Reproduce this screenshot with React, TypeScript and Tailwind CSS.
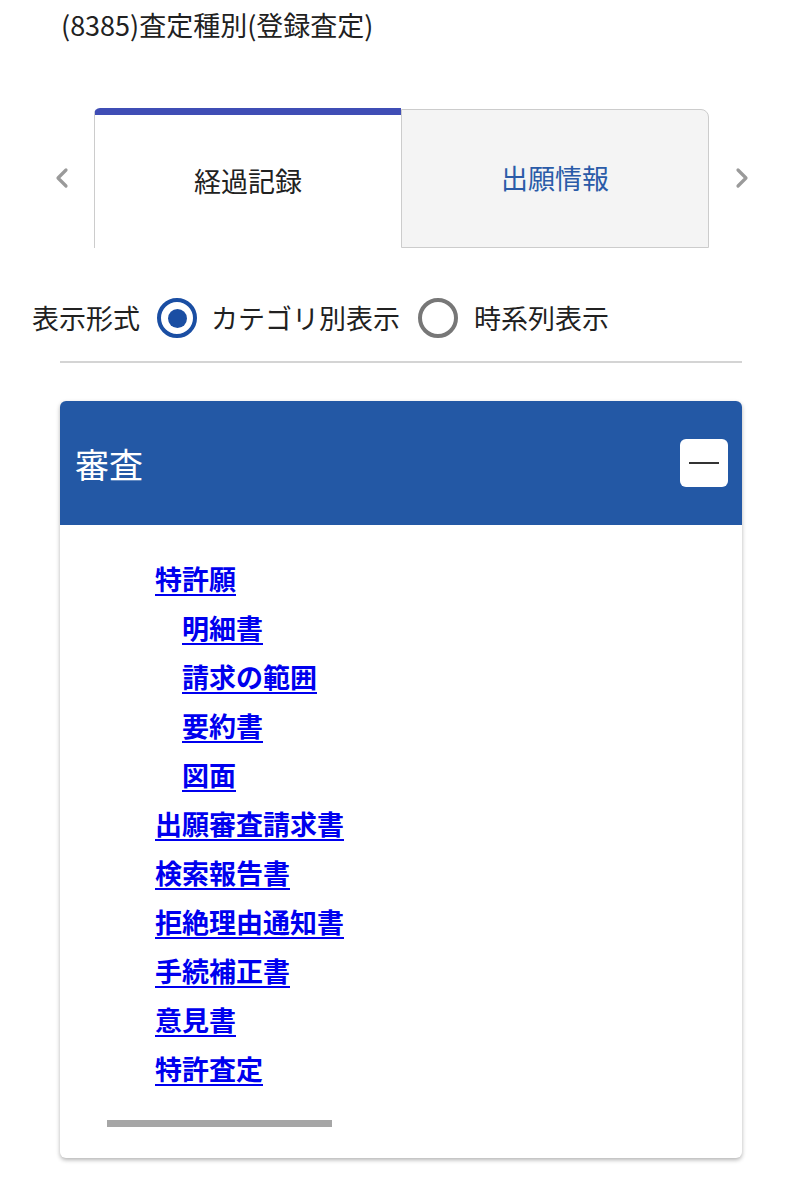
const links: { label: string; indent?: boolean }[] = [
  { label: "特許願" },
  { label: "明細書", indent: true },
  { label: "請求の範囲", indent: true },
  { label: "要約書", indent: true },
  { label: "図面", indent: true },
  { label: "出願審査請求書" },
  { label: "検索報告書" },
  { label: "拒絶理由通知書" },
  { label: "手続補正書" },
  { label: "意見書" },
  { label: "特許査定" },
];

function Chevron({ dir }: { dir: "left" | "right" }) {
  return (
    <svg width="14" height="24" viewBox="0 0 14 24" className="text-[#9a9a9a]">
      <polyline
        points={dir === "left" ? "11,4 3,12 11,20" : "3,4 11,12 3,20"}
        fill="none"
        stroke="currentColor"
        strokeWidth="3.2"
        strokeLinecap="round"
        strokeLinejoin="round"
      />
    </svg>
  );
}

function Radio({ checked }: { checked: boolean }) {
  return (
    <span
      className={`flex h-[40px] w-[40px] items-center justify-center rounded-full border-[4px] ${
        checked ? "border-[#1a4ea3]" : "border-[#777777]"
      }`}
    >
      {checked && <span className="h-[19px] w-[19px] rounded-full bg-[#1a4ea3]" />}
    </span>
  );
}

export default function App() {
  return (
    <div className="min-h-[1200px] w-[802px] bg-white font-['Noto_Sans_CJK_JP','Noto_Sans',sans-serif] text-[#212121]">
      <p className="pl-[61px] pt-[7px] text-[27px] leading-[36px]">(8385)査定種別(登録査定)</p>

      <div className="mt-[65px] flex items-end">
        <div className="flex h-[140px] w-[94px] items-center pl-[55px]">
          <Chevron dir="left" />
        </div>
        <div className="flex h-[140px] w-[307px] items-center justify-center rounded-tl-[6px] border-l border-t-[7px] border-l-[#cccccc] border-t-[#3f4db5] pb-[1px] text-[27px]">
          経過記録
        </div>
        <div className="flex h-[139px] w-[308px] items-center justify-center rounded-tr-[8px] border border-[#cccccc] bg-[#f4f4f4] text-[27px] text-[#2a5ba8]">
          出願情報
        </div>
        <div className="flex h-[140px] items-center pl-[26px]">
          <Chevron dir="right" />
        </div>
      </div>

      <div className="mt-[50px] flex items-center pl-[32px] text-[27px] leading-[40px]">
        <span>表示形式</span>
        <span className="ml-[17px]">
          <Radio checked />
        </span>
        <span className="ml-[14px]">カテゴリ別表示</span>
        <span className="ml-[18px]">
          <Radio checked={false} />
        </span>
        <span className="ml-[16px]">時系列表示</span>
      </div>

      <div className="mx-[60px] mt-[23px] h-[2px] bg-[#d4d4d4]" />

      <div className="mx-[60px] mt-[38px] rounded-[6px] bg-white shadow-[0_2px_4px_rgba(0,0,0,0.3)]">
        <div className="flex h-[124px] items-center justify-between rounded-t-[6px] bg-[#2358a5] pl-[15px] pr-[14px]">
          <span className="text-[34px] text-white">審査</span>
          <button className="flex h-[48px] w-[48px] items-center justify-center rounded-[6px] bg-white">
            <span className="h-[2px] w-[30px] bg-[#333333]" />
          </button>
        </div>
        <div className="pb-[31px] pt-[29px]">
          <ul className="pl-[95px]">
            {links.map((l) => (
              <li key={l.label} className={`text-[27px] leading-[49px] ${l.indent ? "pl-[27px]" : ""}`}>
                <a href="#" className="font-bold text-[#0000ee] underline decoration-[2px] underline-offset-[4px]">
                  {l.label}
                </a>
              </li>
            ))}
          </ul>
          <div className="ml-[47px] mt-[27px] h-[7px] w-[225px] bg-[#a6a6a6]" />
        </div>
      </div>
    </div>
  );
}
